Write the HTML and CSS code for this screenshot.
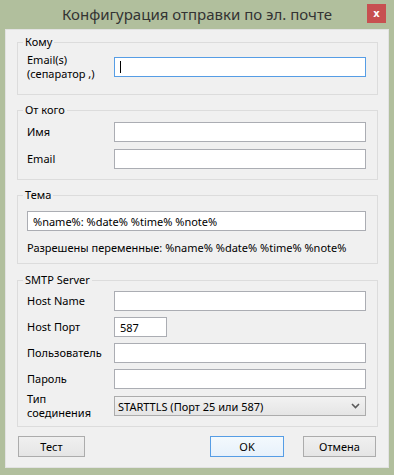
FILE: index.html
```html
<!DOCTYPE html>
<html lang="ru">
<head>
  <meta charset="UTF-8">
  <title>Конфигурация отправки по эл. почте</title>
  <link rel="stylesheet" href="styles.css">
</head>
<body>

  <div class="window">
    <div class="titlebar">
      <span class="title">Конфигурация отправки по эл. почте</span>
      <button class="close">x</button>
    </div>

    <div class="client">

      <fieldset class="group group-to">
        <legend>Кому</legend>
        <div class="row row-tall">
          <label class="lbl">Email(s)<br>(сепаратор ,)</label>
          <span class="field">
            <input class="box focused" type="text">
            <span class="caret"></span>
          </span>
        </div>
      </fieldset>

      <fieldset class="group group-from">
        <legend>От кого</legend>
        <div class="row">
          <label class="lbl">Имя</label>
          <input class="box" type="text">
        </div>
        <div class="row">
          <label class="lbl">Email</label>
          <input class="box" type="text">
        </div>
      </fieldset>

      <fieldset class="group group-subject">
        <legend>Тема</legend>
        <input class="box box-full" type="text" value="%name%: %date% %time% %note%">
        <div class="note">Разрешены переменные: %name% %date% %time% %note%</div>
      </fieldset>

      <fieldset class="group group-smtp">
        <legend>SMTP Server</legend>
        <div class="row">
          <label class="lbl">Host Name</label>
          <input class="box" type="text">
        </div>
        <div class="row">
          <label class="lbl">Host Порт</label>
          <input class="box box-port" type="text" value="587">
        </div>
        <div class="row">
          <label class="lbl">Пользователь</label>
          <input class="box" type="text">
        </div>
        <div class="row">
          <label class="lbl">Пароль</label>
          <input class="box" type="password">
        </div>
        <div class="row row-combo">
          <label class="lbl">Тип<br>соединения</label>
          <div class="combo">
            <span>STARTTLS (Порт 25 или 587)</span>
            <svg width="9" height="6" viewBox="0 0 9 6">
              <path d="M1 1 L4.5 4.5 L8 1" fill="none" stroke="#5a5a5a" stroke-width="1.6"/>
            </svg>
          </div>
        </div>
      </fieldset>

      <div class="buttons">
        <button class="btn btn-test">Тест</button>
        <span class="spacer"></span>
        <button class="btn btn-ok">OK</button>
        <button class="btn btn-cancel">Отмена</button>
      </div>

    </div>
  </div>

</body>
</html>
```

FILE: styles.css
```css
body {
  margin: 0;
  background: #b1bf9d;
  font-family: "Noto Sans", "Open Sans", sans-serif;
  font-size: 11px;
  color: #000;
}

.window {
  width: 394px;
  height: 475px;
}

.titlebar {
  height: 29px;
  display: grid;
  grid-template-columns: 1fr auto 1fr;
  align-items: start;
}

.title {
  grid-column: 2;
  font-size: 15px;
  line-height: 29px;
  color: #333;
  white-space: nowrap;
}

.close {
  grid-column: 3;
  justify-self: end;
  margin: 4px 8px 0 0;
  width: 19px;
  height: 19px;
  padding: 0;
  border: none;
  background: #c75050;
  color: #fff;
  font-family: "DejaVu Sans", sans-serif;
  font-size: 10px;
  font-weight: bold;
  line-height: 17px;
}

.client {
  margin: 0 5px;
  height: 439px;
  box-sizing: border-box;
  border: 1px solid #e2e2e2;
  background: #f0f0f0;
  padding-top: 5px;
}

.group {
  margin: 0 10px 0 11px;
  border: 1px solid #dcdcdc;
  padding: 0 10px 0 9px;
  min-width: 0;
}

.group legend {
  margin-left: -4px;
  padding: 0 2px;
  line-height: 14px;
}

.group-to {
  padding-top: 3px;
  padding-bottom: 12px;
}

.group-from {
  margin-top: 8px;
  padding-top: 5px;
  padding-bottom: 10px;
}

.group-subject {
  margin-top: 8px;
  padding-top: 9px;
  padding-bottom: 8px;
}

.group-smtp {
  margin-top: 9px;
  padding-top: 4px;
  padding-bottom: 10px;
}

.row {
  display: flex;
  align-items: center;
  height: 20px;
}

.row + .row {
  margin-top: 6px;
}

.group-from .row + .row,
.row-combo {
  margin-top: 7px !important;
}

.row-tall {
  height: 30px;
}

.lbl {
  width: 87px;
  flex: none;
  line-height: 14px;
}

.field {
  position: relative;
  display: block;
  width: 252px;
}

.box {
  width: 252px;
  height: 20px;
  box-sizing: border-box;
  margin: 0;
  border: 1px solid #abadb3;
  background: #fff;
  padding: 0 5px;
  font: inherit;
  color: #000;
  outline: none;
}

.box.focused {
  border-color: #569de5;
  display: block;
}

.caret {
  position: absolute;
  left: 6px;
  top: 4px;
  width: 1px;
  height: 12px;
  background: #000;
}

.box-full {
  display: block;
  width: 339px;
}

.box-port {
  width: 53px;
}

.note {
  margin-top: 9px;
  line-height: 15px;
  white-space: nowrap;
}

.combo {
  width: 252px;
  height: 20px;
  box-sizing: border-box;
  border: 1px solid #acacac;
  background: linear-gradient(#f2f2f2, #e5e5e5);
  display: flex;
  align-items: center;
  justify-content: space-between;
  padding: 0 5px 0 3px;
}

.buttons {
  display: flex;
  margin-top: 9px;
  padding: 0 12px;
  gap: 19px;
}

.spacer {
  flex: 1;
}

.btn {
  height: 21px;
  box-sizing: border-box;
  padding: 0;
  border: 1px solid #acacac;
  background: linear-gradient(#f0f0f0, #e5e5e5);
  font: inherit;
  color: #000;
}

.btn-test {
  width: 67px;
}

.btn-ok {
  width: 74px;
  border-color: #569de5;
  background: linear-gradient(#f3f9fd, #e7f1fb);
}

.btn-cancel {
  width: 73px;
}
```
